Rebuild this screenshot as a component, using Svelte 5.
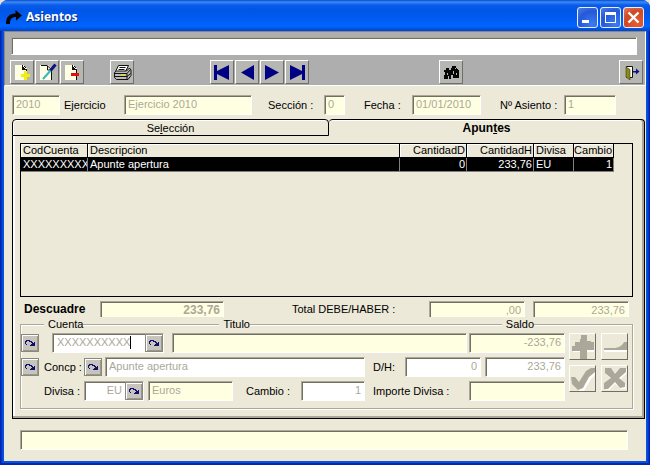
<script>
  const rows = [
    { cuenta: 'XXXXXXXXX', descripcion: 'Apunte apertura', debe: '0', haber: '233,76', divisa: 'EU', cambio: '1' }
  ];
</script>

{#snippet lookup(label)}
  <button class="lookup" type="button" aria-label={label}>
    <svg width="10" height="7" viewBox="0 0 10 7" shape-rendering="crispEdges" aria-hidden="true">
      <path d="M0 1h1V0h4v1h2v1h1v1h1V2h1v4H5V5h1V4h1V3H6V2H4V1H2v1H1v2h1v1H1V4H0z" fill="#10106c" />
    </svg>
  </button>
{/snippet}

<div class="window">
  <header class="titlebar">
    <svg class="appicon" width="16" height="15" viewBox="0 0 16 15" aria-hidden="true">
      <path d="M0 14C0 7 3 3.500 9.500 3.500V0L16 5.500L10 10.500V7C5.500 7 4 9 4 14z" fill="#050505" />
    </svg>
    <h1>Asientos</h1>
    <button class="win" type="button" aria-label="Minimizar">
      <svg width="19" height="19" viewBox="0 0 19 19"><path d="M4 12h7v3H4z" fill="#fff" /></svg>
    </button>
    <button class="win" type="button" aria-label="Maximizar">
      <svg width="19" height="19" viewBox="0 0 19 19"><path d="M4 4h11v11H4zM5 7v7h9V7z" fill="#fff" fill-rule="evenodd" /></svg>
    </button>
    <button class="win close" type="button" aria-label="Cerrar">
      <svg width="19" height="19" viewBox="0 0 19 19"><path d="M4.500 4.500l10 10M14.500 4.500l-10 10" stroke="#fff" stroke-width="2.400" /></svg>
    </button>
  </header>

  <main>
    <section class="toolarea">
      <input class="search" type="text" aria-label="Buscar" />
      <div class="toolbar">
        <div class="tools">
          <button class="tool" type="button" aria-label="Nuevo">
            <svg width="22" height="22" viewBox="0 0 22 22" shape-rendering="crispEdges">
              <path d="M4 4h8l4 4v11H4z" fill="#ffffe6" />
              <path d="M5 4h6v1h2v1h1v1h1v12h1V8h-1V6h-1V5h-2V4zM11 5v4h4" fill="#111" />
              <path d="M13 10h3v3h3v3h-3v3h-3v-3h-3v-3h3z" fill="#f4ee0c" />
            </svg>
          </button>
          <button class="tool" type="button" aria-label="Modificar">
            <svg width="22" height="22" viewBox="0 0 22 22">
              <path d="M4 4h8l4 4v11H4z" fill="#ffffe6" />
              <path d="M5 4.500h6l4.500 4v10.500M11.500 5v4h4" fill="none" stroke="#111" />
              <path d="M7 18L16 8" stroke="#32b8c0" stroke-width="2" />
              <path d="M14.500 9.500L19.500 3.500" stroke="#101080" stroke-width="3" />
            </svg>
          </button>
          <button class="tool" type="button" aria-label="Borrar">
            <svg width="22" height="22" viewBox="0 0 22 22" shape-rendering="crispEdges">
              <path d="M4 4h8l4 4v11H4z" fill="#ffffe6" />
              <path d="M5 4h6v1h2v1h1v1h1v12h1V8h-1V6h-1V5h-2V4zM11 5v4h4" fill="#111" />
              <path d="M10 12h8v3h-8z" fill="#e80c0c" />
            </svg>
          </button>
        </div>
        <button class="tool print" type="button" aria-label="Imprimir">
          <svg width="22" height="22" viewBox="0 0 22 22">
            <path d="M7.500 4.500h10l-3 6h-10z" fill="#fff" stroke="#111" />
            <path d="M8.500 6.500h6M7.500 8.500h6" stroke="#111" />
            <path d="M3.500 11.500l2-1.500h10l3-3 1.500 2v5.500l-3 4H5.500l-2-2z" fill="#bbb" stroke="#111" />
            <path d="M3.500 12.500h12.500l3.500-4M4 15.500h12l3.500-3M16 12.500v6" fill="none" stroke="#111" />
            <path d="M10 14h4" stroke="#ece018" stroke-width="1.500" />
          </svg>
        </button>
        <div class="tools nav">
          <button class="tool" type="button" aria-label="Primero">
            <svg width="22" height="22" viewBox="0 0 22 22"><path d="M3 4h3v6l12-6v15L6 13v6H3z" fill="#000084" /></svg>
          </button>
          <button class="tool" type="button" aria-label="Anterior">
            <svg width="22" height="22" viewBox="0 0 22 22"><path d="M5 11.500L18 4v15z" fill="#000084" /></svg>
          </button>
          <button class="tool" type="button" aria-label="Siguiente">
            <svg width="22" height="22" viewBox="0 0 22 22"><path d="M18 11.500L4 4v15z" fill="#000084" /></svg>
          </button>
          <button class="tool" type="button" aria-label="Último">
            <svg width="22" height="22" viewBox="0 0 22 22"><path d="M19 4h-3v6L4 4v15l12-6v6h3z" fill="#000084" /></svg>
          </button>
        </div>
        <button class="tool find" type="button" aria-label="Localizar">
          <svg width="22" height="22" viewBox="0 0 22 22" shape-rendering="crispEdges">
            <path d="M6 7h3v2h2V7h1V5h4v2h1v1h1v1h1v8h-6v-3h-2v4H9v-3H8v3H4v-4h1v-3H4V9h2z" fill="#060606" />
            <path d="M7 12h1v2H7zM13 10h1v3h-1zM15 7h1v1h-1zM16 12h1v2h-1z" fill="#b5b5b1" />
          </svg>
        </button>
        <button class="tool exit" type="button" aria-label="Salir">
          <svg width="22" height="22" viewBox="0 0 22 22">
            <path d="M6.500 5.500h6v11h-6z" fill="#fff" stroke="#111" />
            <path d="M6 6l4 2.500V19l-4-3z" fill="#8a8a18" stroke="#3c3c08" stroke-width=".6" />
            <path d="M13 10h3V7.500l3.500 3-3.500 3V11.500h-3z" fill="#101088" />
          </svg>
        </button>
      </div>
    </section>

    <section class="record">
      <input class="w48" type="text" readonly value="2010" aria-label="Año" />
      <label class="lb-ej" for="ejercicio">Ejercicio</label>
      <input class="grow" id="ejercicio" type="text" readonly value="Ejercicio 2010" />
      <label class="lb-sec" for="seccion">Sección :</label>
      <input class="w21" id="seccion" type="text" readonly value="0" />
      <label class="lb-fe" for="fecha">Fecha :</label>
      <input class="w69" id="fecha" type="text" readonly value="01/01/2010" />
      <label class="lb-as" for="asiento">Nº Asiento :</label>
      <input class="w52" id="asiento" type="text" readonly value="1" />
    </section>

    <div class="tabs" role="tablist">
      <button class="tab" type="button" role="tab" aria-selected="false"><span>Se<u>l</u>ección</span></button>
      <button class="tab active" type="button" role="tab" aria-selected="true"><span>Apun<u>t</u>es</span></button>
    </div>

    <section class="panel">
      <div class="grid">
        <table>
          <colgroup>
            <col class="c67" /><col /><col class="c67" /><col class="c67" /><col class="c40" /><col class="c40" />
          </colgroup>
          <thead>
            <tr>
              <th>CodCuenta</th><th>Descripcion</th><th class="num">CantidadD</th><th class="num">CantidadH</th><th>Divisa</th><th class="num">Cambio</th>
            </tr>
          </thead>
          <tbody>
            {#each rows as r}
              <tr>
                <td>{r.cuenta}</td><td>{r.descripcion}</td><td class="num">{r.debe}</td><td class="num">{r.haber}</td><td>{r.divisa}</td><td class="num">{r.cambio}</td>
              </tr>
            {/each}
          </tbody>
        </table>
      </div>

      <div class="totals">
        <label class="lb-des" for="descuadre">Descuadre</label>
        <input class="w124 num strong" id="descuadre" type="text" readonly value="233,76" />
        <label class="lb-tot" for="debe">Total DEBE/HABER :</label>
        <input class="w96 num" id="debe" type="text" readonly value=",00" />
        <input class="w96 num last" type="text" readonly value="233,76" aria-label="Total haber" />
      </div>

      <div class="group">
        <div class="legends">
          <label class="lg-cu" for="cuenta">Cuenta</label>
          <label class="lg-ti" for="titulo">Titulo</label>
          <label class="lg-sa" for="saldo">Saldo</label>
        </div>
        <div class="body">
          <div class="lines">
            <div class="line">
              {@render lookup('Ver cuenta')}
              <div class="combo wide">
                <input id="cuenta" type="text" value="XXXXXXXXXX" />
                <i class="caret"></i>
                {@render lookup('Buscar cuenta')}
              </div>
              <input class="grow titulo" id="titulo" type="text" readonly />
              <input class="w96 num" id="saldo" type="text" readonly value="-233,76" />
            </div>
            <div class="line">
              {@render lookup('Ver concepto')}
              <label class="lb-co" for="concepto">Concp :</label>
              {@render lookup('Buscar concepto')}
              <input class="grow white concepto" id="concepto" type="text" value="Apunte apertura" />
              <label class="lb-dh" for="dh">D/H:</label>
              <input class="w76 white num" id="dh" type="text" value="0" />
              <input class="w80 white num" type="text" value="233,76" aria-label="Haber" />
            </div>
            <div class="line">
              <label class="lb-di" for="divisa">Divisa :</label>
              <div class="combo small">
                <input class="num" id="divisa" type="text" value="EU" />
                {@render lookup('Buscar divisa')}
              </div>
              <input class="grow euros" type="text" readonly value="Euros" aria-label="Nombre de la divisa" />
              <label class="lb-ca" for="cambio">Cambio :</label>
              <input class="w64 white num" id="cambio" type="text" value="1" />
              <label class="lb-im" for="importe">Importe Divisa :</label>
              <input class="w96 num" id="importe" type="text" readonly />
            </div>
          </div>
          <div class="actions">
            <button type="button" disabled aria-label="Añadir">
              <svg width="25" height="25" viewBox="0 0 25 25" shape-rendering="crispEdges">
                <path d="M11 3h6v5h7v10h-7v7h-6v-7H3v-6h4V8h4z" fill="#fff" />
                <path d="M10 5h1V1h6v6h4v1h3v8h-7v9h-7v-8H2v-5h3V8h5z" fill="#aca899" />
              </svg>
            </button>
            <button type="button" disabled aria-label="Quitar">
              <svg width="25" height="25" viewBox="0 0 25 25">
                <path d="M2 16h23v2H2z" fill="#fff" />
                <path d="M2 14h11q7-1 9-6h3v8H2z" fill="#aca899" />
              </svg>
            </button>
            <button type="button" disabled aria-label="Aceptar">
              <svg width="25" height="25" viewBox="0 0 25 25">
                <path d="M2 12h3l4 5 8-11 5-4h3v5l-5 5-7 12H9l-6-6z" fill="#fff" transform="translate(1 1)" />
                <path d="M1 11h4l4 5 7-11 5-3h4v4l-6 5-6 11-5 2-6-6z" fill="#aca899" />
              </svg>
            </button>
            <button type="button" disabled aria-label="Cancelar">
              <svg width="25" height="25" viewBox="0 0 25 25">
                <path d="M3 3h5l5 5 5-6h6v4l-7 7 6 5v4h-5l-6-5-6 6H3v-6l6-4-6-6z" fill="#fff" transform="translate(1 1)" />
                <path d="M3 2h6l4 6 5-6h6v4l-7 6 6 5v4l-5 1-5-6-7 7H2v-6l7-5-6-5z" fill="#aca899" />
              </svg>
            </button>
          </div>
        </div>
      </div>
    </section>

    <footer><input type="text" readonly aria-label="Estado" /></footer>
  </main>
</div>

<style>
  :global(body) { margin: 0; background: #e4e2d8; }
  * { box-sizing: border-box; }
  .window {
    display: flex; flex-direction: column; min-height: 100vh;
    padding: 0 4px 4px; border-radius: 8px 8px 0 0;
    background: linear-gradient(90deg, #0019a8 0, #0852e0 3px, #0852e0 calc(100% - 3px), #0019a8 100%);
    font: 11px/14px "Liberation Sans", Arial, sans-serif; color: #000;
    box-shadow: inset 0 -2px 0 #0628a8;
  }
  button, input { font: inherit; margin: 0; }
  button { padding: 0; }
  svg { display: block; }

  .titlebar {
    display: flex; align-items: center; gap: 2px; height: 31px; margin: 0 -4px; padding: 3px 6px 0;
    border-radius: 8px 8px 0 0;
    background: linear-gradient(#0a48c8 0, #3a8cf8 2px, #0a5cec 5px, #0055e4 10px, #005cf4 20px, #0066fe 26px, #0044d0 31px);
  }
  h1 {
    flex: 1; margin: 0 0 0 2px; color: #fff; font: bold 12px/20px "Open Sans", sans-serif;
    text-shadow: 1px 1px 0 #0a2878;
  }
  .win {
    width: 21px; height: 21px; border: 1px solid #e8f0ff; border-radius: 3px;
    background: radial-gradient(circle at 75% 85%, #3c7cf4, #2458d8 60%, #5480e0);
  }
  .close { background: radial-gradient(circle at 70% 80%, #e85c30, #d04824 60%, #e08068); }

  main { flex: 1; display: flex; flex-direction: column; background: #ece9d8; }
  .toolarea {
    padding: 5px 3px 1px 5px; background: #aeaeae;
    border: 1px solid #8a887c; border-right-color: #fff; border-bottom-color: #fff;
  }
  .toolbar { display: flex; margin-top: 5px; }
  .tools { display: flex; gap: 1px; }
  .tool {
    display: grid; place-items: center; width: 24px; height: 24px; background: #b6b6b2;
    border: 1px solid #fff; border-right-color: #716f64; border-bottom-color: #716f64;
  }
  .print { margin-left: 26px; }
  .nav { margin-left: 76px; }
  .find { margin-left: 130px; }
  .exit { margin-left: auto; margin-right: -1px; }

  input {
    min-width: 0; height: 20px; padding: 0 3px 2px; border: 1px solid #aca899;
    border-right-color: #fff; border-bottom-color: #fff; border-radius: 0; outline: 0;
    box-shadow: inset 1px 1px 0 #716f64; background: #ffffe1; color: #aca899;
  }
  .search { display: block; width: calc(100% - 6px); margin-left: 1px; height: 18px; background: #fff; }
  .grow { flex: 1; }
  .white { background: #fff; }
  .num { text-align: right; }
  .w21 { width: 21px; }
  .w48 { width: 48px; }
  .w52 { width: 52px; }
  .w64 { width: 64px; }
  .w69 { width: 69px; }
  .w76 { width: 76px; }
  .w80 { width: 80px; }
  .w96 { width: 96px; }
  .w124 { width: 124px; }
  label { flex: none; white-space: nowrap; }

  .record { display: flex; align-items: center; padding: 9px 30px 4px 8px; }
  .lb-ej { width: 64px; padding-left: 4px; }
  .lb-sec { width: 72px; padding-left: 16px; }
  .lb-fe { width: 67px; padding-left: 19px; }
  .lb-as { width: 83px; padding-left: 19px; }

  .tabs { display: flex; margin: 0 1px 0 8px; }
  .tab {
    flex: 1; height: 17px; border: 1px solid #000; border-radius: 4px 4px 0 0;
    background: #ece9d8; color: #000; line-height: 14px; box-shadow: inset 1px 1px 0 #fff;
  }
  .tab u { text-underline-offset: 1px; }
  .active {
    font-size: 12px; font-weight: bold; border-left: 0; border-bottom: 0;
    box-shadow: inset -2px 0 0 #aca899, inset 0 1px 0 #fff;
  }

  .panel {
    flex: 1; display: flex; flex-direction: column; margin: 0 1px 0 8px; padding: 7px 11px 9px 7px;
    border: 1px solid #000; border-top: 0;
    box-shadow: inset -2px -2px 0 #aca899, inset 2px 0 0 #fff;
  }
  .grid { flex: 1; min-height: 60px; padding-right: 18px; border: 1px solid #000; }
  table { width: 100%; table-layout: fixed; border-collapse: separate; border-spacing: 0; }
  .c67 { width: 67px; }
  .c40 { width: 40px; }
  th, td {
    height: 14px; padding: 0 1px 0 2px; overflow: hidden; white-space: nowrap;
    font-weight: normal; text-align: left; line-height: 13px;
  }
  th { border-right: 1px solid #000; border-bottom: 1px solid #000; box-shadow: inset 1px 1px 0 #fff; }
  td { background: #000; color: #fff; border-right: 1px solid #808080; border-bottom: 1px solid #808080; }
  th.num, td.num { text-align: right; padding-left: 0; }

  .totals { display: flex; align-items: center; padding: 4px 4px 0 0; }
  .totals input { height: 16px; padding-bottom: 0; border-bottom: 0; }
  .lb-des { width: 80px; padding-left: 4px; font-size: 12px; font-weight: bold; }
  .strong { font-size: 12px; font-weight: bold; }
  .lb-tot { flex: 1; padding-left: 68px; }
  .last { margin-left: 8px; }

  .group { margin-top: 7px; border: 1px solid #aca899; box-shadow: inset 1px 1px 0 #fff, 1px 1px 0 #fff; }
  .legends { display: flex; margin-top: -8px; padding-right: 98px; }
  .legends label { padding-left: 4px; background: #ece9d8; }
  .lg-cu { margin-left: 23px; }
  .lg-ti { margin-left: 136px; }
  .lg-sa { margin-left: auto; }
  .body { display: flex; gap: 4px; padding: 2px 4px 7px 0; }
  .lines { flex: 1; min-width: 0; display: flex; flex-direction: column; gap: 4px; }
  .line { display: flex; align-items: center; }
  .line > input:not(.grow) { flex: none; }
  .lookup {
    flex: none; display: grid; place-items: center; width: 18px; height: 18px; background: #c6c4bc;
    border: 1px solid #8a887c; box-shadow: inset 1px 1px 0 #fff, inset -1px -1px 0 #9a988c;
  }
  .combo {
    flex: none; position: relative; display: flex; height: 20px; background: #fff; border: 1px solid #aca899;
    border-right-color: #fff; border-bottom-color: #fff; box-shadow: inset 1px 1px 0 #716f64;
  }
  .combo input { flex: 1; height: 18px; border: 0; box-shadow: none; background: none; padding-left: 4px; }
  .caret { position: absolute; left: 77px; top: 2px; width: 1px; height: 13px; background: #000; }
  .wide { width: 112px; margin-left: 13px; }
  .small { width: 60px; }
  .titulo { margin: 0 2px 0 8px; }
  .lb-co { width: 45px; padding-left: 5px; }
  .concepto { margin-left: 3px; }
  .lb-dh { width: 40px; padding-left: 8px; }
  .w76 { margin-right: 4px; }
  .lb-di { width: 63px; padding-left: 23px; }
  .euros { margin-left: 4px; }
  .lb-ca { width: 68px; padding-left: 13px; }
  .lb-im { width: 104px; padding-left: 8px; }

  .actions { display: grid; grid-template-columns: 27px 27px; gap: 5px; align-content: start; }
  .actions button {
    width: 27px; height: 27px; background: #ece9d8;
    border: 1px solid #fff; border-right-color: #716f64; border-bottom-color: #716f64;
  }

  footer { padding: 11px 18px 11px 16px; }
  footer input { display: block; width: 100%; }
</style>
